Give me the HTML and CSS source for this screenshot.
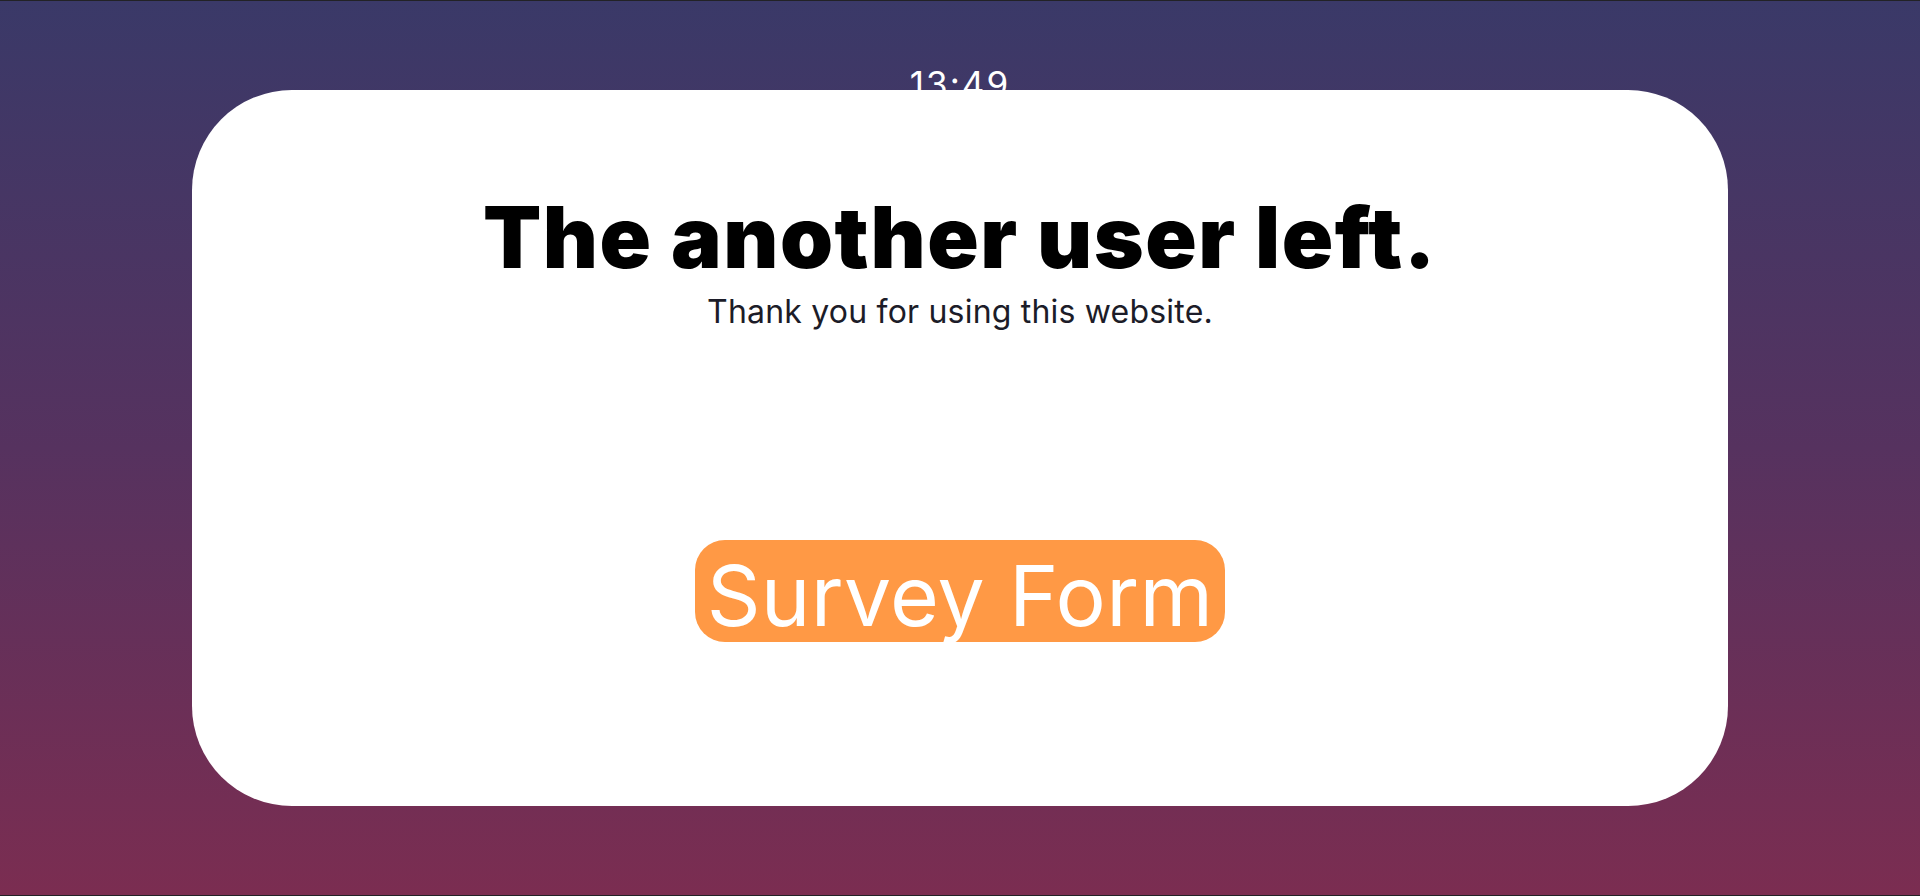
FILE: index.html
```html
<!DOCTYPE html>
<html lang="en">
<head>
<meta charset="utf-8">
<title>Left</title>
<link rel="stylesheet" href="styles.css">
</head>
<body>
  <div class="clock">13:49</div>
  <main class="card">
    <h1 class="title">The another user left.</h1>
    <p class="subtitle">Thank you for using this website.</p>
    <button class="survey-btn" type="button">Survey Form</button>
  </main>
</body>
</html>
```
FILE: styles.css
```css
* { box-sizing: border-box; }
html, body { margin: 0; padding: 0; height: 100%; }
body {
  position: relative;
  height: 100vh;
  overflow: hidden;
  border-top: 1px solid #222226;
  border-bottom: 1px solid #222226;
  background: linear-gradient(180deg, #3a3968 0%, #56325f 50%, #7b2d51 100%);
  display: flex;
  align-items: center;
  justify-content: center;
  font-family: "Inter", "Liberation Sans", sans-serif;
}
.clock {
  position: absolute;
  top: 63px;
  left: 0;
  right: 0;
  text-align: center;
  color: #ffffff;
  font-size: 35px;
  line-height: 40px;
  font-weight: 400;
  letter-spacing: 2px;
}
.card {
  position: relative;
  width: 80%;
  height: 80%;
  background: #ffffff;
  border-radius: 100px;
  display: flex;
  flex-direction: column;
  align-items: center;
  padding-top: 97px;
}
.title {
  margin: 0;
  font-size: 85px;
  line-height: 1.2;
  font-weight: 900;
  color: #000000;
  letter-spacing: 1.5px;
}
.subtitle {
  margin: 4px 0 0;
  font-size: 32px;
  line-height: 1.2;
  color: #1c1c28;
  font-weight: 400;
  letter-spacing: 0.2px;
}
.survey-btn {
  margin-top: 208px;
  border: none;
  background: #ff9945;
  color: #ffffff;
  font-family: "Inter", "Liberation Sans", sans-serif;
  font-size: 84px;
  line-height: 1;
  font-weight: 400;
  padding: 14px 12px 4px;
  border-radius: 30px;
  letter-spacing: 0.3px;
  cursor: pointer;
}
```
